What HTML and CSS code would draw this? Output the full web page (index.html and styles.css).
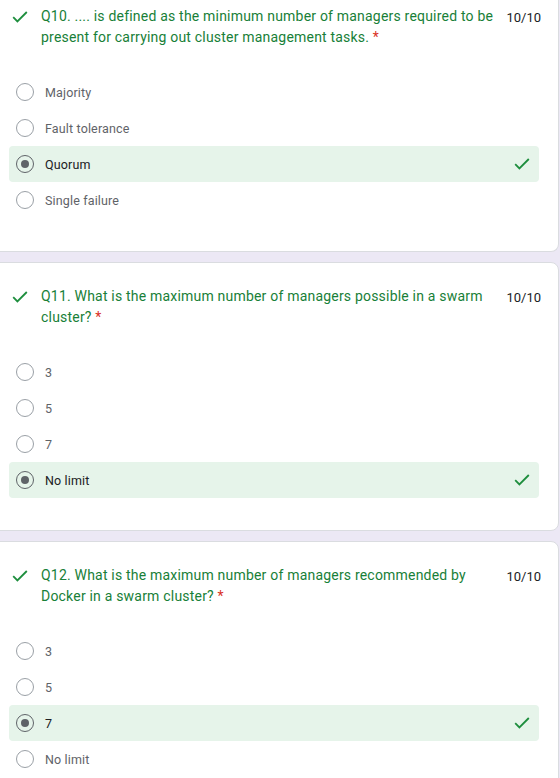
FILE: index.html
```html
<!DOCTYPE html>
<html>
<head>
<meta charset="utf-8">
<link rel="stylesheet" href="styles.css">
</head>
<body>
<div class="page">
  <section class="card card-first">
    <div class="qhead">
      <svg class="qcheck" viewBox="0 0 16 12" width="16" height="12"><path d="M1.2 6.2 L5.4 10.4 L14.8 1" fill="none" stroke="#1e8e3e" stroke-width="1.8"/></svg>
      <div class="qtitle">Q10. .... is defined as the minimum number of managers required to be present for carrying out cluster management tasks. <span class="req">*</span></div>
      <div class="score">10/10</div>
    </div>
    <div class="options">
      <div class="opt"><span class="radio"></span><span class="label">Majority</span></div>
      <div class="opt"><span class="radio"></span><span class="label">Fault tolerance</span></div>
      <div class="opt correct"><span class="radio on"></span><span class="label">Quorum</span><svg class="ocheck" viewBox="0 0 16 12" width="16" height="12"><path d="M1.2 6.2 L5.4 10.4 L14.8 1" fill="none" stroke="#1e8e3e" stroke-width="1.8"/></svg></div>
      <div class="opt"><span class="radio"></span><span class="label">Single failure</span></div>
    </div>
  </section>
  <section class="card">
    <div class="qhead">
      <svg class="qcheck" viewBox="0 0 16 12" width="16" height="12"><path d="M1.2 6.2 L5.4 10.4 L14.8 1" fill="none" stroke="#1e8e3e" stroke-width="1.8"/></svg>
      <div class="qtitle">Q11. What is the maximum number of managers possible in a swarm cluster? <span class="req">*</span></div>
      <div class="score">10/10</div>
    </div>
    <div class="options">
      <div class="opt"><span class="radio"></span><span class="label">3</span></div>
      <div class="opt"><span class="radio"></span><span class="label">5</span></div>
      <div class="opt"><span class="radio"></span><span class="label">7</span></div>
      <div class="opt correct"><span class="radio on"></span><span class="label">No limit</span><svg class="ocheck" viewBox="0 0 16 12" width="16" height="12"><path d="M1.2 6.2 L5.4 10.4 L14.8 1" fill="none" stroke="#1e8e3e" stroke-width="1.8"/></svg></div>
    </div>
  </section>
  <section class="card">
    <div class="qhead">
      <svg class="qcheck" viewBox="0 0 16 12" width="16" height="12"><path d="M1.2 6.2 L5.4 10.4 L14.8 1" fill="none" stroke="#1e8e3e" stroke-width="1.8"/></svg>
      <div class="qtitle">Q12. What is the maximum number of managers recommended by Docker in a swarm cluster? <span class="req">*</span></div>
      <div class="score">10/10</div>
    </div>
    <div class="options">
      <div class="opt"><span class="radio"></span><span class="label">3</span></div>
      <div class="opt"><span class="radio"></span><span class="label">5</span></div>
      <div class="opt correct"><span class="radio on"></span><span class="label">7</span><svg class="ocheck" viewBox="0 0 16 12" width="16" height="12"><path d="M1.2 6.2 L5.4 10.4 L14.8 1" fill="none" stroke="#1e8e3e" stroke-width="1.8"/></svg></div>
      <div class="opt"><span class="radio"></span><span class="label">No limit</span></div>
    </div>
  </section>
</div>
</body>
</html>
```

FILE: styles.css
```css
html, body {
  margin: 0;
  padding: 0;
  background: #ffffff;
}
body {
  font-family: Roboto, "Liberation Sans", Arial, sans-serif;
  overflow: hidden;
}
.page {
  width: 560px;
  background: #ece8f5;
  display: flex;
  flex-direction: column;
  gap: 10px;
}
.card {
  background: #ffffff;
  border: 1px solid #dadce0;
  border-radius: 8px;
  margin-left: -10px;
  width: 569px;
  box-sizing: border-box;
  padding: 23px 17px 32px 18px;
}
.card-first {
  border-top: none;
  border-radius: 0 0 8px 0;
  padding-top: 6px;
  padding-bottom: 33px;
}
.qhead {
  display: flex;
  align-items: flex-start;
}
.qcheck {
  flex: none;
  margin: 5px 0 0 3px;
}
.qtitle {
  flex: 1;
  margin-left: 13px;
  margin-right: 4px;
  font-size: 14px;
  line-height: 21px;
  color: #188038;
  letter-spacing: 0.2px;
}
.req {
  color: #d93025;
}
.score {
  flex: none;
  font-size: 13px;
  line-height: 21px;
  color: #202124;
  margin-top: 1px;
}
.options {
  margin-top: 26px;
  display: flex;
  flex-direction: column;
}
.opt {
  height: 36px;
  display: flex;
  align-items: center;
  padding-left: 7px;
  padding-right: 9px;
  border-radius: 4px;
  margin-right: 2px;
}
.opt.correct {
  background: #e6f4ea;
}
.radio {
  flex: none;
  width: 18px;
  height: 18px;
  box-sizing: border-box;
  border: 1.5px solid #9aa0a6;
  border-radius: 50%;
  display: flex;
  align-items: center;
  justify-content: center;
}
.radio.on {
  border: 1.5px solid #5f6368;
}
.radio.on::after {
  content: "";
  width: 8px;
  height: 8px;
  border-radius: 50%;
  background: #5f6368;
}
.label {
  flex: 1;
  margin-left: 11px;
  font-size: 12.5px;
  letter-spacing: 0.15px;
  color: #5f6368;
}
.correct .label {
  color: #202124;
}
.ocheck {
  flex: none;
}
```
